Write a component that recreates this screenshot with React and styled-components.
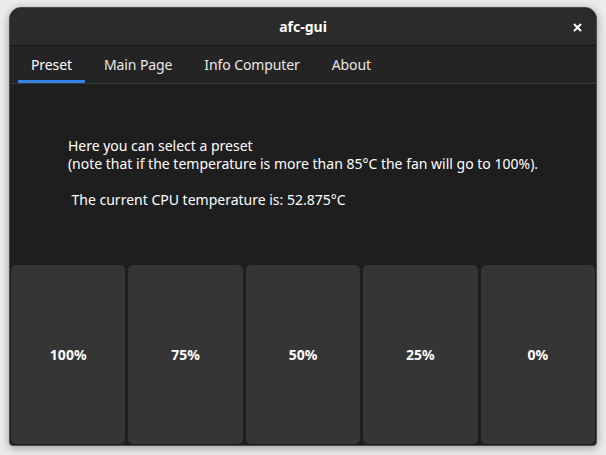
import React, { useState } from 'react'
import styled, { createGlobalStyle } from 'styled-components'

const GlobalStyle = createGlobalStyle`
  html, body {
    margin: 0;
    padding: 0;
    background: #ececec;
    font-family: "Noto Sans", "Open Sans", sans-serif;
  }
`

const Page = styled.div`
  width: 606px;
  height: 455px;
  padding: 7px 9px 9px 9px;
  box-sizing: border-box;
`

const Window = styled.div`
  height: 439px;
  display: flex;
  flex-direction: column;
  background: #1e1e1e;
  border: 1px solid #4a4a4a;
  border-radius: 12px 12px 4px 4px;
  box-shadow: 0 2px 10px rgba(0, 0, 0, 0.35);
  overflow: hidden;
  box-sizing: border-box;
`

const HeaderBar = styled.div`
  height: 37px;
  flex-shrink: 0;
  display: flex;
  align-items: center;
  justify-content: center;
  position: relative;
  background: #2b2b2b;
  border-bottom: 1px solid #151515;
  color: #ffffff;
  font-weight: 700;
  font-size: 14px;
`

const CloseButton = styled.button`
  position: absolute;
  right: 9px;
  top: 9px;
  width: 20px;
  height: 20px;
  border: none;
  background: transparent;
  display: flex;
  align-items: center;
  justify-content: center;
  padding: 0;
`

const TabBar = styled.div`
  height: 37px;
  flex-shrink: 0;
  display: flex;
  gap: 6px;
  padding: 0 8px;
  background: #242424;
  border-bottom: 1px solid #3a3a3a;
`

const Tab = styled.div`
  display: flex;
  align-items: center;
  padding: 0 13px;
  color: ${p => (p.$active ? '#ffffff' : '#e8e8e8')};
  font-size: 14px;
  letter-spacing: -0.1px;
  cursor: pointer;
  box-shadow: ${p => (p.$active ? 'inset 0 -3px 0 #3584e4' : 'none')};
`

const Content = styled.div`
  flex: 1;
  display: flex;
  flex-direction: column;
`

const Info = styled.div`
  flex: 1;
  display: flex;
  justify-content: center;
  padding-top: 53px;
`

const InfoText = styled.p`
  margin: 0;
  white-space: pre;
  color: #ffffff;
  font-size: 14px;
  line-height: 18px;
`

const Presets = styled.div`
  height: 179px;
  display: grid;
  grid-template-columns: repeat(5, 1fr);
  gap: 3px;
  padding: 0 1px 1px 1px;
`

const PresetButton = styled.button`
  background: #353535;
  border: none;
  border-radius: 5px;
  color: #ffffff;
  font-family: "Noto Sans", "Open Sans", sans-serif;
  font-weight: 700;
  font-size: 14px;
  cursor: pointer;
`

const tabs = ['Preset', 'Main Page', 'Info Computer', 'About']

const presets = ['100%', '75%', '50%', '25%', '0%']

export default function App() {
  const [active, setActive] = useState(0)
  return (
    <>
      <GlobalStyle />
      <Page>
        <Window>
          <HeaderBar>
            afc-gui
            <CloseButton>
              <svg width="9" height="9" viewBox="0 0 9 9">
                <path d="M1 1 L8 8 M8 1 L1 8" stroke="#fff" strokeWidth="2" />
              </svg>
            </CloseButton>
          </HeaderBar>
          <TabBar>
            {tabs.map((t, i) => (
              <Tab key={t} $active={i === active} onClick={() => setActive(i)}>
                {t}
              </Tab>
            ))}
          </TabBar>
          <Content>
            <Info>
              <InfoText>
                {'Here you can select a preset\n(note that if the temperature is more than 85°C the fan will go to 100%).\n\n The current CPU temperature is: 52.875°C'}
              </InfoText>
            </Info>
            <Presets>
              {presets.map(p => (
                <PresetButton key={p}>{p}</PresetButton>
              ))}
            </Presets>
          </Content>
        </Window>
      </Page>
    </>
  )
}
